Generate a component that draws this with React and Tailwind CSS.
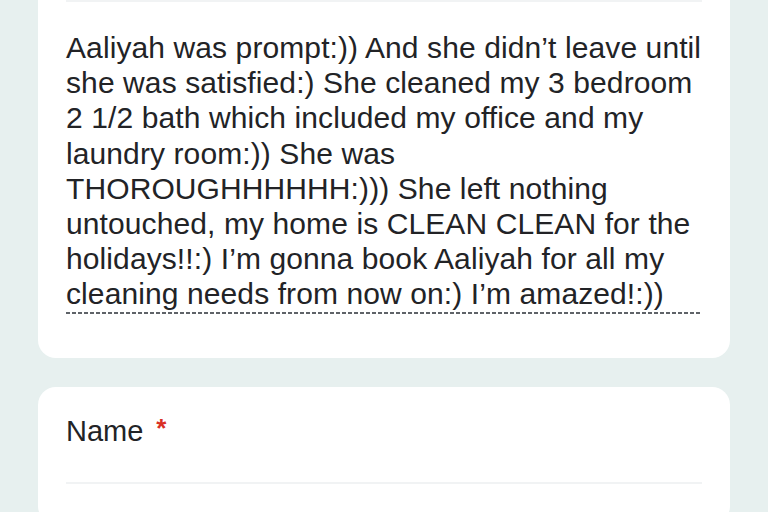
import React from 'react';

const lines = [
  'Aaliyah was prompt:)) And she didn\u2019t leave until',
  'she was satisfied:) She cleaned my 3 bedroom',
  '2 1/2 bath which included my office and my',
  'laundry room:)) She was',
  'THOROUGHHHHHH:))) She left nothing',
  'untouched, my home is CLEAN CLEAN for the',
  'holidays!!:) I\u2019m gonna book Aaliyah for all my',
  'cleaning needs from now on:) I\u2019m amazed!:))',
];

export default function App() {
  return (
    <div
      className="w-[768px] h-[512px] overflow-hidden bg-[#e7f0ef] px-[38px] text-[#222326]"
      style={{ fontFamily: '"Liberation Sans", Arial, sans-serif' }}
    >
      <div className="bg-white rounded-b-[18px] px-[28px] pb-[44px]">
        <div className="h-[2px] bg-[#f1f3f4]" />
        <div className="pt-[28px]">
          <div className="text-[30px] leading-[35.2px] tracking-[0.1px]">
            {lines.map((l) => (
              <div key={l} className="whitespace-nowrap">{l}</div>
            ))}
          </div>
          <div className="h-[2px] bg-[repeating-linear-gradient(to_right,#5f6368_0_4px,transparent_4px_6px)]" />
        </div>
      </div>

      <div className="mt-[29px] bg-white rounded-[18px] px-[28px] pt-[26px]">
        <div className="flex items-start h-[36px] text-[29px] leading-[36px]">
          <span>Name</span>
          <span className="ml-[13px] mt-[-3px] text-[#d93025] text-[26px] font-bold">*</span>
        </div>
        <div className="h-[33px]" />
        <div className="h-[2px] bg-[#f1f3f4]" />
        <div className="h-[40px]" />
      </div>
    </div>
  );
}
